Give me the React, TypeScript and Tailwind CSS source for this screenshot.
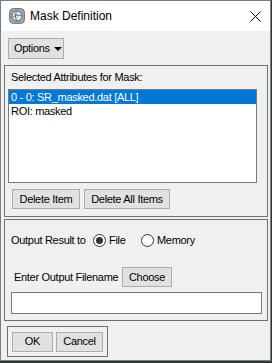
const font = "font-['Liberation_Sans',Arial,sans-serif]";

function Btn({ label, w }: { label: string; w: string }) {
  return (
    <div
      className={`${w} h-[20px] border border-[#adadad] bg-[#e1e1e1] flex items-center justify-center text-[11px] text-black`}
    >
      {label}
    </div>
  );
}

function Radio({ checked }: { checked?: boolean }) {
  return (
    <div className="w-[13px] h-[13px] rounded-full border border-[#333] bg-white flex items-center justify-center">
      {checked && <div className="w-[7px] h-[7px] rounded-full bg-[#333]" />}
    </div>
  );
}

export default function App() {
  return (
    <div className={`w-[272px] h-[363px] bg-[#2e3a33] ${font}`}>
      <div className="w-[271px] h-[361px] border border-[#7c7c7c] bg-[#f0f0f0] flex flex-col">
        {/* title bar */}
        <div className="h-[30px] bg-white flex items-center">
          <svg width="16" height="16" viewBox="0 0 16 16" className="ml-[8px]">
            <rect x="0.5" y="0.5" width="15" height="15" rx="4" fill="#9aa7b0" stroke="#6f7c86" />
            <circle cx="8" cy="8" r="5.2" fill="#d9e0e5" stroke="#5f6b74" />
            <path d="M3.5 9.5 C6 7, 10 6.5, 13 8" stroke="#5f6b74" fill="none" />
            <path d="M8 2.8 C6 5, 6 10, 8 13.2" stroke="#5f6b74" fill="none" />
          </svg>
          <span className="ml-[5px] text-[12px] text-black">Mask Definition</span>
          <svg width="11" height="11" viewBox="0 0 11 11" className="ml-auto mr-[9px]">
            <path d="M0.5 0.5 L10.5 10.5 M10.5 0.5 L0.5 10.5" stroke="#000" strokeWidth="1" />
          </svg>
        </div>

        {/* body */}
        <div className="flex flex-col pt-[7px] text-[11px] tracking-[-0.3px] text-black">
          <div className="ml-[7px] w-[56px] h-[21px] border border-[#adadad] bg-[#e1e1e1] flex items-center pl-[5px] gap-[4px]">
            <span>Options</span>
            <svg width="8" height="4" viewBox="0 0 8 4">
              <path d="M0 0 H8 L4 4 Z" fill="#000" />
            </svg>
          </div>

          {/* attributes panel */}
          <div className="ml-[3px] mt-[6px] w-[264px] h-[152px] border border-[#707070] flex flex-col">
            <div className="h-[23px] flex items-center pl-[6px]">Selected Attributes for Mask:</div>
            <div className="ml-[3px] w-[249px] h-[94px] border border-[#7a7a7a] bg-white flex flex-col">
              <div className="h-[14px] bg-[#0078d7] text-white flex items-center pl-[2px]">
                0 - 0: SR_masked.dat [ALL]
              </div>
              <div className="h-[14px] flex items-center pl-[2px]">ROI: masked</div>
            </div>
            <div className="flex gap-[4px] ml-[7px] mt-[6px]">
              <Btn label="Delete Item" w="w-[68px]" />
              <Btn label="Delete All Items" w="w-[86px]" />
            </div>
          </div>

          {/* output panel */}
          <div className="ml-[3px] mt-[2px] w-[264px] h-[102px] border border-[#707070] flex flex-col">
            <div className="mt-[10px] h-[20px] flex items-center pl-[6px]">
              <span className="w-[82px]">Output Result to</span>
              <div className="w-[48px] flex items-center gap-[3px]">
                <Radio checked />
                <span>File</span>
              </div>
              <div className="flex items-center gap-[3px]">
                <Radio />
                <span>Memory</span>
              </div>
            </div>
            <div className="mt-[17px] h-[20px] flex items-center pl-[9px]">
              <span className="w-[108px]">Enter Output Filename</span>
              <Btn label="Choose" w="w-[50px]" />
            </div>
            <div className="ml-[6px] mt-[5px] w-[251px] h-[22px] border border-[#7a7a7a] bg-white" />
          </div>

          {/* ok / cancel */}
          <div className="ml-[6px] mt-[5px] w-[101px] h-[31px] border border-[#707070] flex items-center gap-[3px] pl-[4px]">
            <Btn label="OK" w="w-[41px]" />
            <Btn label="Cancel" w="w-[47px]" />
          </div>
        </div>
      </div>
    </div>
  );
}
